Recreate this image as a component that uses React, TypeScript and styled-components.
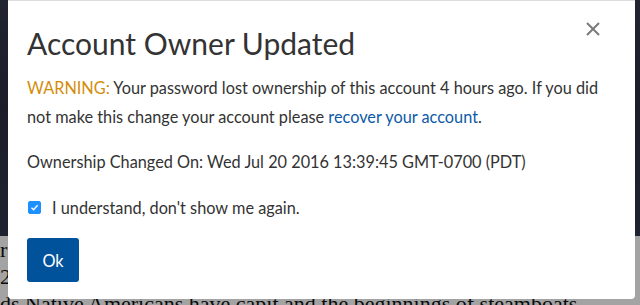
import React, { useState } from 'react';
import styled, { createGlobalStyle } from 'styled-components';

const GlobalStyle = createGlobalStyle`
  html, body {
    margin: 0;
    padding: 0;
  }
  body {
    width: 640px;
    height: 305px;
    overflow: hidden;
    font-family: Lato, "Liberation Sans", sans-serif;
  }
`;

const Page = styled.div`
  position: relative;
  width: 640px;
  height: 305px;
  overflow: hidden;
  background: #fafafa;
`;

const Hero = styled.div`
  height: 236px;
  background: linear-gradient(180deg, #34394c 0%, #2a2f40 45%, #30354a 100%);
`;

const Article = styled.div`
  font-family: "Liberation Serif", serif;
  font-size: 22px;
  line-height: 27px;
  color: #111;
  white-space: nowrap;
`;

const Backdrop = styled.div`
  position: absolute;
  inset: 0;
  background: rgba(0, 0, 0, 0.35);
`;

const Modal = styled.div`
  position: absolute;
  top: 0;
  left: 8px;
  width: 627px;
  height: 299px;
  box-sizing: border-box;
  background: #fff;
  border-top: 1px solid #ddd;
  border-radius: 0 0 4px 4px;
  padding: 0 19px;
  color: #333;
`;

const CloseButton = styled.button`
  position: absolute;
  top: 19px;
  right: 33px;
  width: 18px;
  height: 18px;
  padding: 0;
  border: 0;
  background: none;
  cursor: pointer;
  display: flex;
  align-items: center;
  justify-content: center;
`;

const Title = styled.h1`
  margin: 0;
  padding-top: 23px;
  font-size: 30px;
  font-weight: 400;
  line-height: 38px;
  color: #333;
`;

const Text = styled.p`
  margin: 0;
  font-size: 16.3px;
  line-height: 29px;
`;

const Warning = styled(Text)`
  margin-top: 11px;
`;

const Changed = styled(Text)`
  margin-top: 16px;
`;

const WarnLabel = styled.span`
  color: #d38d0b;
`;

const Link = styled.a`
  color: #0d5aa7;
  text-decoration: none;
`;

const CheckRow = styled.label`
  display: flex;
  align-items: center;
  gap: 11px;
  margin-top: 17px;
  font-size: 16.3px;
  line-height: 29px;
  cursor: pointer;
`;

const Box = styled.span<{ $checked: boolean }>`
  width: 13px;
  height: 13px;
  margin-left: 1px;
  border-radius: 2px;
  box-sizing: border-box;
  background: ${(p) => (p.$checked ? '#1e90ff' : '#fff')};
  border: 1px solid ${(p) => (p.$checked ? '#1e90ff' : '#888')};
  display: flex;
  align-items: center;
  justify-content: center;
`;

const OkButton = styled.button`
  display: block;
  margin-top: 16px;
  width: 52px;
  height: 44px;
  border: 0;
  border-radius: 3px;
  background: #00529b;
  color: #fff;
  font-family: inherit;
  font-size: 16.3px;
  cursor: pointer;
`;

const App = () => {
  const [checked, setChecked] = useState(true);

  return (
    <>
      <GlobalStyle />
      <Page>
        <Hero />
        <Article>
          r<br />
          2(<br />
          ds Native Americans have capit and the beginnings of steamboats
        </Article>
        <Backdrop />
        <Modal>
          <CloseButton aria-label="Close">
            <svg width="14" height="14" viewBox="0 0 14 14">
              <path d="M1 1 L13 13 M13 1 L1 13" stroke="#7a7a7a" strokeWidth="2" />
            </svg>
          </CloseButton>
          <Title>Account Owner Updated</Title>
          <Warning>
            <WarnLabel>WARNING:</WarnLabel> Your password lost ownership of this account 4 hours ago. If you did
            not make this change your account please <Link href="#">recover your account</Link>.
          </Warning>
          <Changed>Ownership Changed On: Wed Jul 20 2016 13:39:45 GMT-0700 (PDT)</Changed>
          <CheckRow onClick={() => setChecked(!checked)}>
            <Box $checked={checked}>
              {checked && (
                <svg width="9" height="9" viewBox="0 0 9 9">
                  <path d="M1.5 4.8 L3.6 6.8 L7.6 2.2" stroke="#fff" strokeWidth="1.4" fill="none" />
                </svg>
              )}
            </Box>
            I understand, don't show me again.
          </CheckRow>
          <OkButton>Ok</OkButton>
        </Modal>
      </Page>
    </>
  );
};

export default App;
